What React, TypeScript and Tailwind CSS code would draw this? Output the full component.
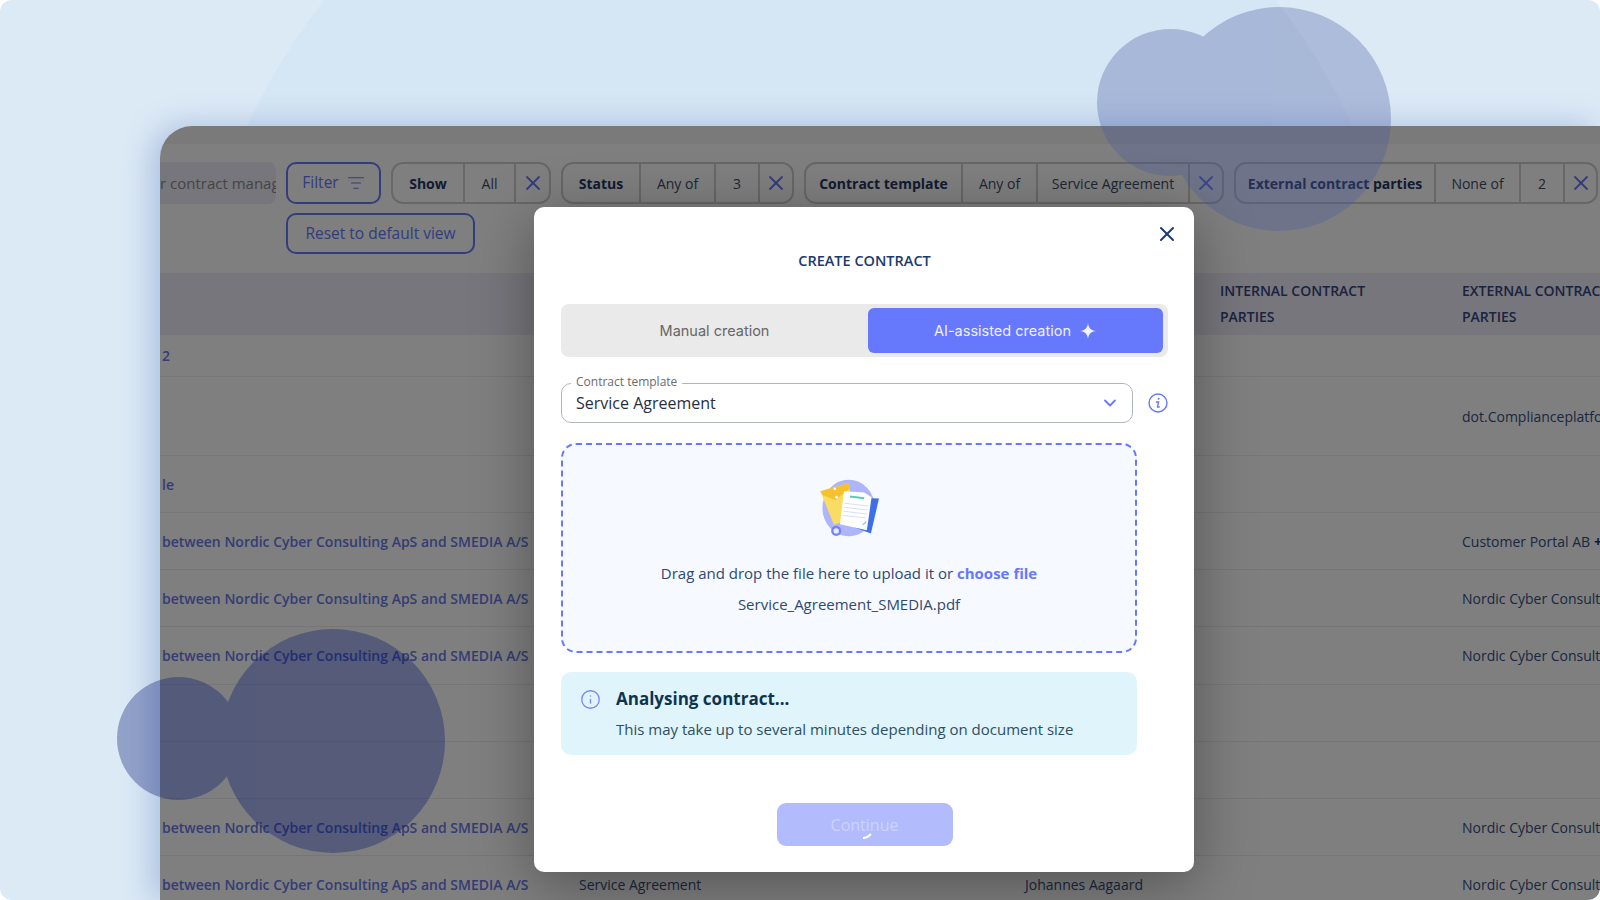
import React from "react";
import { ChevronDown, Info, ListFilter, X } from "lucide-react";

const pills = [
  { cells: ["Show", "All"], widths: [72, 51], w: 160 },
  { cells: ["Status", "Any of", "3"], widths: [78, 75, 44], w: 233 },
  { cells: ["Contract template", "Any of", "Service Agreement"], widths: [157, 75, 152], w: 420 },
  { cells: ["External contract parties", "None of", "2"], widths: [200, 85, 44], w: 364 },
];

const link = "between Nordic Cyber Consulting ApS and SMEDIA A/S";
const nordic = "Nordic Cyber Consulting ApS";

const rows = [
  { h: "h-[42px]", name: "2", external: "" },
  { h: "h-[79px]", name: "", external: "dot.Complianceplatform" },
  { h: "h-[57px]", name: "le", external: "" },
  { h: "h-[57px]", name: link, external: "Customer Portal AB", more: true },
  { h: "h-[57px]", name: link, external: nordic },
  { h: "h-[58px]", name: link, external: nordic },
  { h: "h-[57px]", name: "", external: "" },
  { h: "h-[57px]", name: "", external: "" },
  { h: "h-[57px]", name: link, external: nordic },
  { h: "h-[57px]", name: link, type: "Service Agreement", owner: "Johannes Aagaard", external: nordic },
];

const FilterPill = ({ cells, widths, w }: { cells: string[]; widths: number[]; w: number }) => {
  return (
    <div
      className="flex h-[42px] shrink-0 rounded-[12px] border-2 border-[#cfcfcf] text-[14px] text-[#3d4c66]"
      style={{ width: w }}
    >
      {cells.map((c, i) => (
        <div
          key={c}
          className={`flex items-center justify-center whitespace-nowrap border-r-2 border-[#cfcfcf] ${
            i === 0 ? "font-bold text-[#24365f]" : ""
          }`}
          style={{ width: widths[i] }}
        >
          {c}
        </div>
      ))}
      <div className="flex flex-1 items-center justify-center text-[#6678fb]">
        <X size={24} strokeWidth={1.8} />
      </div>
    </div>
  );
};

const DocsIllustration = () => {
  return (
    <svg width="64" height="64" viewBox="110 50 190 190">
      <ellipse cx="204" cy="142" rx="78" ry="84" fill="#aeb6fb" />
      <path d="M254 112 L294 114 L270 218 L222 200 Z" fill="#3f6fe8" />
      <path d="M120 92 L204 68 L222 170 L160 192 Z" fill="#fbdc62" />
      <path d="M120 92 L204 68 L207 84 L165 118 L128 104 Z" fill="#f5c22e" />
      <circle cx="163" cy="85" r="4" fill="#fff" />
      <circle cx="168" cy="110" r="4" fill="#fff" />
      <path d="M190 92 L250 96 L272 110 L258 208 L178 190 Z" fill="#ffffff" />
      <path d="M208 108 L250 113" stroke="#5cc9bb" strokeWidth="6" />
      <path
        d="M192 128 L262 136 M191 140 L260 148 M189 152 L258 160 M187 164 L256 172"
        stroke="#d9defa"
        strokeWidth="3"
      />
      <path d="M245 192 L251 188 L256 182" stroke="#5cc9bb" strokeWidth="3" fill="none" />
      <circle cx="167" cy="210" r="15" fill="#7682f5" />
      <circle cx="167" cy="210" r="8" fill="#e8ebff" />
    </svg>
  );
};

const SelectInfoIcon = () => {
  return (
    <svg width="20" height="20" viewBox="0 0 20 20" fill="none" stroke="#6678fb">
      <circle cx="10" cy="10" r="9" strokeWidth="1.4" />
      <circle cx="10.6" cy="5.8" r="1" fill="#6678fb" stroke="none" />
      <path d="M8.4 9h2.2l-1.1 4.6c-.1.6.5.9 1.8.2" strokeWidth="1.4" strokeLinecap="round" />
    </svg>
  );
};

const Modal = () => {
  return (
    <div className="absolute left-[534px] top-[207px] flex h-[665px] w-[660px] flex-col rounded-[10px] bg-white pl-[27px] pr-[26px] pt-[44px] shadow-[0_12px_60px_rgba(0,0,0,0.35)]">
      <button className="absolute right-[15px] top-[15px] text-[#1c3a6e]">
        <X size={24} strokeWidth={2} />
      </button>
      <h2 className="text-center text-[14.5px] font-semibold leading-[20px] text-[#1c3a6e]">CREATE CONTRACT</h2>

      <div className="mt-[33px] flex h-[53px] items-center rounded-[8px] bg-[#eaeaea] pr-[5px] font-['Inter',sans-serif] text-[14.5px]">
        <div className="flex-1 text-center text-[#666666]">Manual creation</div>
        <div className="flex h-[45px] w-[295px] items-center justify-center gap-2 rounded-[6px] bg-[#6678fb] text-[#eef0ff]">
          AI-assisted creation
          <svg width="18" height="18" viewBox="0 0 18 18" fill="#f0f2ff">
            <path d="M9 1 C9.6 6 12 8.4 17 9 C12 9.6 9.6 12 9 17 C8.4 12 6 9.6 1 9 C6 8.4 8.4 6 9 1 Z" />
          </svg>
        </div>
      </div>

      <div className="mt-[26px] flex items-center">
        <div className="relative flex h-[40px] w-[576px] items-center justify-between rounded-[10px] border border-[#b0b5bf] pl-[14px] pr-[12px]">
          <span className="absolute -top-[10px] left-[9px] bg-white px-[5px] text-[12px] leading-[16px] text-[#6b6b6b]">
            Contract template
          </span>
          <span className="text-[16px] text-[#26303f]">Service Agreement</span>
          <ChevronDown size={20} strokeWidth={2.2} className="text-[#6678fb]" />
        </div>
        <div className="ml-[15px]">
          <SelectInfoIcon />
        </div>
      </div>

      <div className="mt-[20px] flex h-[210px] w-[576px] flex-col items-center rounded-[15px] border-2 border-dashed border-[#6678fb] bg-[#f6f9ff] pt-[32px] text-[15px] text-[#2f4a6f]">
        <DocsIllustration />
        <p className="mt-[16px] leading-[32px]">
          Drag and drop the file here to upload it or <span className="font-bold text-[#6678fb]">choose file</span>
        </p>
        <p className="leading-[31px]">Service_Agreement_SMEDIA.pdf</p>
      </div>

      <div className="mt-[19px] flex h-[83px] w-[576px] rounded-[10px] bg-[#e0f4fc] pl-[19px] pt-[16px]">
        <Info size={21} strokeWidth={1.5} className="mt-[1px] text-[#7a86fb]" />
        <div className="ml-[15px]">
          <div className="text-[17px] font-bold leading-[22px] text-[#0f3450]">Analysing contract...</div>
          <div className="mt-[8px] text-[15px] leading-[22px] text-[#2f4f60]">
            This may take up to several minutes depending on document size
          </div>
        </div>
      </div>

      <button className="relative mx-auto mt-[48px] h-[43px] w-[176px] rounded-[9px] bg-[#b2bbfc] text-[16px] text-[#cdd3fd]">
        Continue
        <svg className="absolute left-[85px] top-[30px]" width="12" height="6" viewBox="0 0 12 6">
          <path d="M1 5 C4 5 6 4 9 1" stroke="#ffffff" strokeWidth="2" fill="none" />
        </svg>
      </button>
    </div>
  );
};

const App = () => {
  return (
    <div className="h-[900px] w-[1600px] overflow-hidden bg-white font-['Open_Sans',sans-serif]">
      <div className="relative h-[900px] w-[1600px] overflow-hidden rounded-[12px] bg-[#dceaf6]">
        <div className="absolute left-[193px] top-[-230px] h-[1214px] w-[1214px] rounded-full bg-[#d5e6f4]" />

        <div className="relative ml-[160px] mt-[126px] h-[774px] w-[1440px] overflow-hidden rounded-tl-[32px] rounded-br-[12px] bg-white shadow-[-8px_0_30px_rgba(80,110,180,0.35)]">
          <div className="h-[18px] bg-[#f4f4f4]" />

          <div className="flex pt-[18px]">
            <div className="flex h-[42px] w-[116px] shrink-0 items-center overflow-hidden whitespace-nowrap rounded-r-[8px] bg-[#eeecf8] text-[15px] text-[#8a8a8a]">
              r contract management
            </div>
            <div className="ml-[10px] flex flex-col gap-[9px]">
              <div className="flex gap-[10px]">
                <button className="flex h-[42px] w-[95px] shrink-0 items-center justify-center gap-2 rounded-[10px] border-2 border-[#6678fb] text-[15.5px] text-[#6678fb]">
                  Filter
                  <ListFilter size={18} strokeWidth={1.6} />
                </button>
                {pills.map((p) => (
                  <FilterPill key={p.cells[0]} cells={p.cells} widths={p.widths} w={p.w} />
                ))}
              </div>
              <button className="h-[41px] w-[189px] rounded-[10px] border-2 border-[#6678fb] text-[15.5px] text-[#6678fb]">
                Reset to default view
              </button>
            </div>
          </div>

          <div className="mt-[19px] grid h-[62px] grid-cols-[1060px_242px_1fr] items-center bg-[#eeecf8] text-[14px] font-semibold leading-[26px] text-[#36467f]">
            <div />
            <div>
              INTERNAL CONTRACT
              <br />
              PARTIES
            </div>
            <div className="whitespace-nowrap">
              EXTERNAL CONTRACT
              <br />
              PARTIES
            </div>
          </div>

          {rows.map((r, i) => (
            <div
              key={i}
              className={`${r.h} grid grid-cols-[419px_446px_195px_242px_1fr] items-center whitespace-nowrap border-b border-[#ececec] text-[14px] text-[#344f7f]`}
            >
              <div className="pl-[2px] font-semibold text-[#6a78e8]">{r.name}</div>
              <div>{r.type}</div>
              <div>{r.owner}</div>
              <div />
              <div className="overflow-hidden">
                {r.external}
                {r.more && <span className="ml-1 font-bold text-[#24365f]">+ 1</span>}
              </div>
            </div>
          ))}

          <div className="absolute inset-0 bg-black/50" />
        </div>

        {/* blobs sit on the dimmed panel */}
        <div className="absolute inset-0 opacity-[0.32]">
          <div className="absolute left-[1097px] top-[29px] h-[147px] w-[147px] rounded-full bg-[#4b5aa0]" />
          <div className="absolute left-[1167px] top-[7px] h-[224px] w-[224px] rounded-full bg-[#4b5aa0]" />
        </div>
        <div className="absolute inset-0 opacity-[0.33]">
          <div className="absolute left-[117px] top-[677px] h-[123px] w-[123px] rounded-full bg-[#00126e]" />
          <div className="absolute left-[221px] top-[629px] h-[224px] w-[224px] rounded-full bg-[#00126e]" />
        </div>

        <Modal />
      </div>
    </div>
  );
};

export default App;
